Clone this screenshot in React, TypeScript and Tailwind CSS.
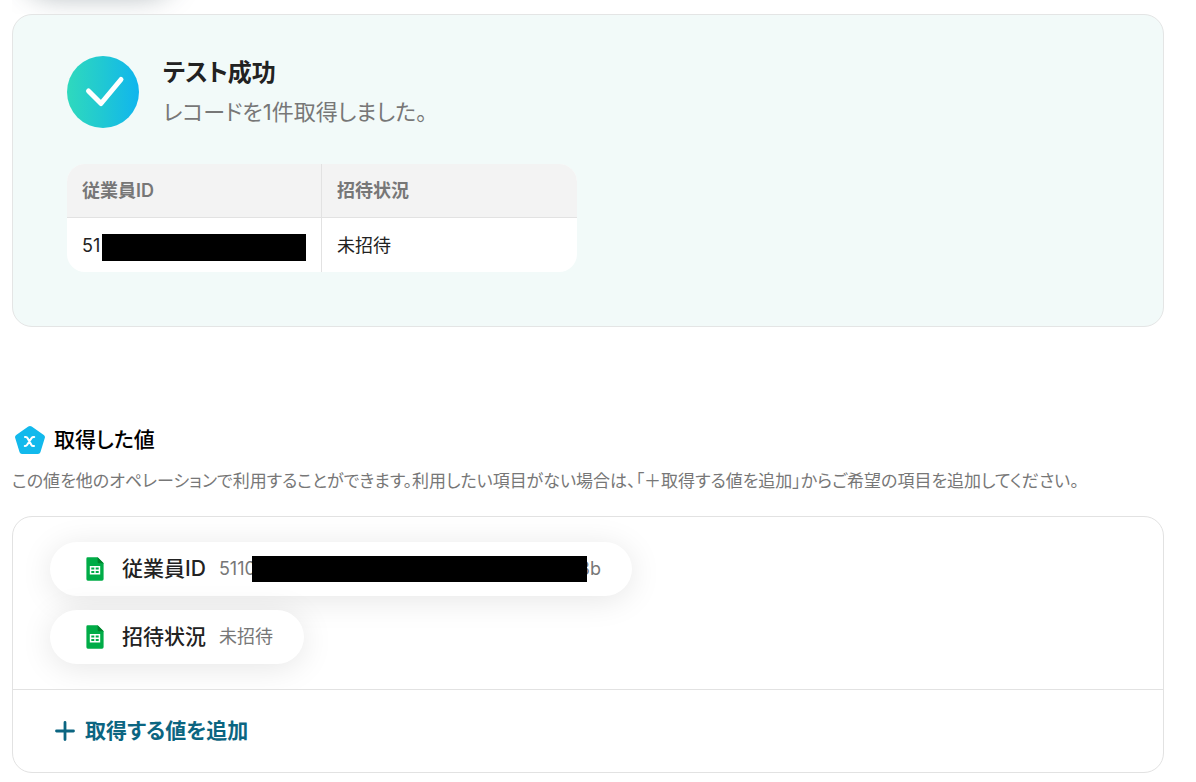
import type { ReactNode } from "react";

const records = [{ id: "51", status: "未招待" }];

function SuccessIcon() {
  return (
    <svg viewBox="0 0 72 72" className="size-18 shrink-0" aria-hidden="true">
      <defs>
        <linearGradient id="success" x1="0" y1="0" x2="1" y2="0">
          <stop offset="0" stopColor="#2fd9bd" />
          <stop offset="0.5" stopColor="#20c8d3" />
          <stop offset="1" stopColor="#10b5ee" />
        </linearGradient>
      </defs>
      <circle cx="36" cy="36" r="36" fill="url(#success)" />
      <path
        d="M21.5 35 L34 47.5 L54 23.5"
        fill="none"
        stroke="#fff"
        strokeWidth="5"
        strokeLinecap="round"
        strokeLinejoin="round"
      />
    </svg>
  );
}

function ValueIcon() {
  return (
    <svg viewBox="0 0 30 28" className="h-7 w-[30px] shrink-0" aria-hidden="true">
      <path
        d="M13.3 0.6 Q15 -0.5 16.7 0.6 L28.8 9 Q30.4 10.2 29.8 12 L25.4 26.2 Q24.8 28 23 28 H7 Q5.2 28 4.6 26.2 L0.2 12 Q-0.4 10.2 1.2 9 Z"
        fill="#12b9ec"
      />
      <path
        d="M10 11 H10.8 Q12 11 12.5 12 L16.4 18.9 Q17 20 18.2 20 H19 M19.2 11 H18.6 Q17.3 11 16.6 12 L12.2 18.8 Q11.4 20 10.2 20 H9.8"
        fill="none"
        stroke="#fff"
        strokeWidth="2.1"
        strokeLinecap="round"
      />
    </svg>
  );
}

function SheetIcon() {
  return (
    <svg viewBox="0 0 18 24" className="h-6 w-[18px] shrink-0" aria-hidden="true">
      <path d="M1.6 0.3 H11.6 L17.6 6.3 V22.1 Q17.6 23.7 16 23.7 H1.8 Q0.4 23.7 0.4 22.1 V1.7 Q0.4 0.3 1.6 0.3 Z" fill="#00ac47" />
      <path d="M11.6 0.3 L17.6 6.3 H13 Q11.6 6.3 11.6 4.9 Z" fill="#00832d" />
      <path
        fillRule="evenodd"
        d="M3.8 9 H14.2 V17.4 H3.8 Z M5.3 10.5 V12.5 H8.3 V10.5 Z M9.7 10.5 V12.5 H12.7 V10.5 Z M5.3 13.9 V15.9 H8.3 V13.9 Z M9.7 13.9 V15.9 H12.7 V13.9 Z"
        fill="#fff"
      />
    </svg>
  );
}

function ValueChip({ label, children }: { label: string; children: ReactNode }) {
  return (
    <li className="flex h-[54px] items-center rounded-full bg-white pr-[31px] pl-9 shadow-[0_4px_32px_rgba(0,0,0,0.1)]">
      <SheetIcon />
      <span className="ml-[18px] text-[21px] leading-8 font-medium text-[#222]">{label}</span>
      <span className="ml-[13px] flex items-center text-[18px] leading-8 text-[#777]">{children}</span>
    </li>
  );
}

export default function App() {
  return (
    <main className="bg-white pr-8 pb-2 pl-3 font-['Inter','Noto_Sans_CJK_JP',sans-serif] text-[#222] [font-feature-settings:'palt']">
      <div className="relative h-3.5 overflow-hidden" aria-hidden="true">
        <div className="absolute -top-16 left-3 h-14 w-[150px] rounded-full shadow-[0_4px_28px_rgba(50,70,80,0.4)]" />
      </div>

      <section className="rounded-[20px] border border-[#e4e5e5] bg-[#f2faf9] px-[54px] pt-[41px] pb-[54px]">
        <div className="flex gap-6">
          <SuccessIcon />
          <div>
            <h2 className="text-[24px] leading-[34px] font-bold">テスト成功</h2>
            <p className="mt-1.5 text-[22px] leading-8 text-[#777]">レコードを1件取得しました。</p>
          </div>
        </div>
        <div className="mt-9 w-full max-w-[510px] overflow-hidden rounded-[18px] bg-white">
          <table className="w-full table-fixed border-separate border-spacing-0 text-left text-[18px] leading-7">
            <thead className="bg-[#f3f3f3] text-[#777]">
              <tr className="h-[54px]">
                <th scope="col" className="border-r border-b border-[#e2e2e2] px-[15px] font-semibold">従業員ID</th>
                <th scope="col" className="border-b border-[#e2e2e2] px-[15px] font-semibold">招待状況</th>
              </tr>
            </thead>
            <tbody>
              {records.map((record) => (
                <tr key={record.id} className="h-[54px]">
                  <td className="border-r border-[#e2e2e2] px-[15px] pt-0.5">
                    <div className="flex items-center">
                      <span className="w-5">{record.id}</span>
                      <span className="mt-0.5 h-[27px] flex-1 bg-black" />
                    </div>
                  </td>
                  <td className="px-[15px] pt-0.5">{record.status}</td>
                </tr>
              ))}
            </tbody>
          </table>
        </div>
      </section>

      <section className="mt-[97px]">
        <h2 className="flex items-center gap-[9px] pl-[3px] text-[21px] leading-8 font-medium text-black">
          <ValueIcon />
          取得した値
        </h2>
        <p className="mt-3 text-[17px] leading-[26px] text-[#777]">
          この値を他のオペレーションで利用することができます。利用したい項目がない場合は、「＋取得する値を追加」からご希望の項目を追加してください。
        </p>

        <div className="mt-[22px] rounded-[20px] border border-[#e2e2e2]">
          <ul className="flex flex-col items-start gap-3.5 overflow-hidden rounded-t-[20px] px-[37px] py-[25px]">
            <ValueChip label="従業員ID">
              <span>5110</span>
              <span className="relative -mr-2 -ml-1 h-[26px] w-[335px] bg-black" />
              <span>8b</span>
            </ValueChip>
            <ValueChip label="招待状況">未招待</ValueChip>
          </ul>
          <div className="border-t border-[#e2e2e2] px-[42px] py-[25px]">
            <button type="button" className="flex items-center gap-2.5 text-[21px] leading-8 font-bold text-[#0b6581]">
              <svg viewBox="0 0 20 20" className="size-5" aria-hidden="true">
                <path d="M10 1.5 V18.5 M1.5 10 H18.5" stroke="currentColor" strokeWidth="2.8" strokeLinecap="round" />
              </svg>
              取得する値を追加
            </button>
          </div>
        </div>
      </section>
    </main>
  );
}
